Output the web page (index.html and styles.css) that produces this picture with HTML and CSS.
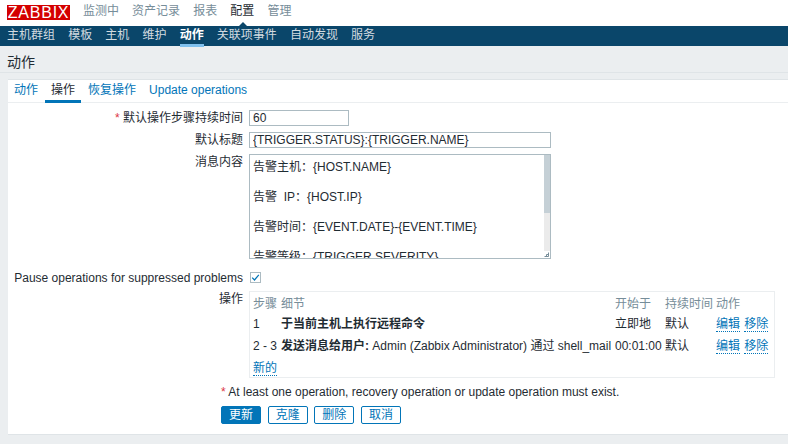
FILE: index.html
```html
<!DOCTYPE html>
<html lang="en">
<head>
    <meta charset="UTF-8">
    <meta name="viewport" content="width=device-width, initial-scale=1.0">
    <title>动作</title>
    <link rel="stylesheet" href="styles.css">
</head>
<body>
    <header class="top-bar">
        <div class="logo">ZABBIX</div>
        <nav class="top-menu">
            <a>监测中</a>
            <a>资产记录</a>
            <a>报表</a>
            <a class="current">配置</a>
            <a>管理</a>
        </nav>
    </header>
    <nav class="sub-menu">
        <a>主机群组</a>
        <a>模板</a>
        <a>主机</a>
        <a>维护</a>
        <a class="current">动作</a>
        <a>关联项事件</a>
        <a>自动发现</a>
        <a>服务</a>
    </nav>
    <h1 class="page-title">动作</h1>

    <main class="card">
        <div class="tabs">
            <a>动作</a>
            <a class="current">操作</a>
            <a>恢复操作</a>
            <a>Update operations</a>
        </div>

        <form class="form">
            <label class="label"><span class="req">*</span> 默认操作步骤持续时间</label>
            <div class="field"><input class="input short" type="text" value="60"></div>

            <label class="label">默认标题</label>
            <div class="field"><input class="input wide" type="text" value="{TRIGGER.STATUS}:{TRIGGER.NAME}"></div>

            <label class="label">消息内容</label>
            <div class="field">
                <div class="message-box">
                    <textarea class="message" spellcheck="false">告警主机：{HOST.NAME}

告警  IP：{HOST.IP}

告警时间：{EVENT.DATE}-{EVENT.TIME}

告警等级：{TRIGGER.SEVERITY}

告警信息：{TRIGGER.NAME}

告警项目：{TRIGGER.KEY1}</textarea>
                    <div class="scrollbar">
                        <div class="thumb"></div>
                        <div class="track"></div>
                        <div class="corner">
                            <svg width="6" height="7" viewBox="0 0 6 7"><path d="M4.5 1.5V5.5H0.5M4.5 3.5H2.5V5.5" fill="none" stroke="#768d99" stroke-width="1"/></svg>
                        </div>
                    </div>
                </div>
            </div>

            <label class="label pause">Pause operations for suppressed problems</label>
            <div class="field pause pause-field">
                <span class="check">
                    <svg width="9" height="9" viewBox="0 0 9 9"><path d="M1.2 4.6 3.5 7 7.8 1.8" fill="none" stroke="#0275b8" stroke-width="1.2"/></svg>
                </span>
            </div>

            <label class="label ops">操作</label>
            <div class="field">
                <table class="ops-table">
                    <thead>
                        <tr>
                            <th class="col-step">步骤</th>
                            <th class="col-detail">细节</th>
                            <th class="col-start">开始于</th>
                            <th class="col-duration">持续时间</th>
                            <th>动作</th>
                        </tr>
                    </thead>
                    <tbody>
                        <tr class="row-one">
                            <td>1</td>
                            <td><b>于当前主机上执行远程命令</b></td>
                            <td>立即地</td>
                            <td>默认</td>
                            <td><a class="link">编辑</a> <a class="link">移除</a></td>
                        </tr>
                        <tr class="row-two">
                            <td>2 - 3</td>
                            <td><b>发送消息给用户:</b> Admin (Zabbix Administrator) 通过 shell_mail</td>
                            <td>00:01:00</td>
                            <td>默认</td>
                            <td><a class="link">编辑</a> <a class="link">移除</a></td>
                        </tr>
                        <tr class="row-new">
                            <td colspan="5"><a class="link">新的</a></td>
                        </tr>
                    </tbody>
                </table>
            </div>
        </form>

        <p class="note"><span class="req">*</span> At least one operation, recovery operation or update operation must exist.</p>
        <div class="buttons">
            <button class="btn primary" type="button">更新</button>
            <button class="btn" type="button">克隆</button>
            <button class="btn" type="button">删除</button>
            <button class="btn" type="button">取消</button>
        </div>
    </main>
</body>
</html>
```
FILE: styles.css
```css
body {
    margin: 0;
    height: 444px;
    overflow: hidden;
    background-color: #ebeef0;
    color: #1f2c33;
    font-family: "Liberation Sans", "Noto Sans CJK SC", sans-serif;
    font-size: 12px;
}

.top-bar {
    display: flex;
    align-items: center;
    height: 26px;
    padding-left: 7px;
    background-color: #fff;
}
.logo {
    width: 63px;
    height: 15px;
    margin-top: -2px;
    background-color: #d40000;
    color: #fff;
    font-size: 16px;
    line-height: 15px;
    letter-spacing: 0.8px;
    text-align: center;
}
.top-menu {
    display: flex;
    gap: 13.1px;
    margin-left: 13px;
    margin-top: -7px;
    color: #768d99;
}
.top-menu a {
    position: relative;
}
.top-menu .current {
    color: #1f2c33;
}
.top-menu .current::after {
    content: "";
    position: absolute;
    left: 8px;
    top: 21px;
    border: 5px solid transparent;
    border-top: 0;
    border-bottom-color: #0a466a;
}

.sub-menu {
    display: flex;
    gap: 13.15px;
    height: 20px;
    padding-left: 7px;
    background-color: #0a466a;
    color: #d3dbe0;
    line-height: 18px;
}
.sub-menu a {
    height: 18px;
}
.sub-menu .current {
    border-bottom: 3px solid #7fc0ee;
    color: #fff;
    font-weight: bold;
}

.page-title {
    height: 26px;
    margin: 0 0 6px;
    padding-left: 7px;
    border-bottom: 1px solid #dfe4e7;
    font-size: 14px;
    font-weight: normal;
    line-height: 32px;
}

.card {
    height: 354px;
    margin-left: 8px;
    background-color: #fff;
    border-top: 1px solid #dfe4e7;
    border-bottom: 1px solid #dfe4e7;
}

.tabs {
    display: flex;
    height: 22px;
    border-bottom: 1px solid #ebeef0;
    color: #0275b8;
    line-height: 20px;
}
.tabs a {
    height: 20px;
    padding: 0 6px;
    margin-right: 1px;
}
.tabs .current {
    border-bottom: 3px solid #0275b8;
    color: #1f2c33;
}

.form {
    display: grid;
    grid-template-columns: 235px 1fr;
    column-gap: 6px;
    padding-top: 7px;
}
.label {
    text-align: right;
    line-height: 15px;
    padding-top: 1px;
}
.req {
    color: #dc3545;
}
.field {
    margin-bottom: 6px;
}
.input {
    display: block;
    box-sizing: border-box;
    height: 16px;
    padding: 0 3px;
    border: 1px solid #acbbc2;
    color: #1f2c33;
    font: inherit;
}
.short {
    width: 100px;
}
.wide {
    width: 302px;
}

.message-box {
    display: flex;
    box-sizing: border-box;
    width: 302px;
    height: 105px;
    border: 1px solid #acbbc2;
}
.message {
    flex: 1;
    padding: 5px 3px 0;
    border: 0;
    outline: 0;
    color: #1f2c33;
    font: inherit;
    line-height: 15px;
    overflow: hidden;
    resize: none;
}
.scrollbar {
    display: flex;
    flex-direction: column;
    width: 6px;
}
.thumb {
    height: 58px;
    background-color: #c5d0d6;
}
.track {
    flex: 1;
    background-color: #ebebeb;
}
.corner {
    height: 7px;
    background-color: #fff;
}
.corner svg {
    display: block;
}

.pause {
    box-sizing: border-box;
    height: 23px;
    margin-top: 3px;
    margin-bottom: 0;
    padding-top: 3px;
    white-space: nowrap;
}
.pause-field {
    padding-top: 4px;
}
.check {
    display: flex;
    align-items: center;
    justify-content: center;
    box-sizing: border-box;
    width: 11px;
    height: 11px;
    margin-left: 1px;
    border: 1px solid #acbbc2;
}

.ops-table {
    box-sizing: border-box;
    width: 526px;
    height: 87px;
    border: 1px solid #ebeef0;
    border-collapse: separate;
    border-spacing: 0;
    table-layout: fixed;
}
.ops-table th,
.ops-table td {
    padding: 0 0 0 3px;
    text-align: left;
    white-space: nowrap;
    line-height: 15px;
}
.ops-table th {
    height: 19px;
    padding-top: 3px;
    color: #768d99;
    font-weight: normal;
}
.row-one td {
    height: 20px;
}
.row-two td {
    height: 25px;
}
.row-new td {
    height: 18px;
}
.col-step {
    width: 25px;
}
.col-detail {
    width: 331px;
}
.col-start {
    width: 47px;
}
.col-duration {
    width: 48px;
}
.link {
    color: #0275b8;
    border-bottom: 1px dotted #0275b8;
}
.link + .link {
    margin-left: 1px;
}

.note {
    margin: 1px 0 0 213px;
    line-height: 15px;
}
.buttons {
    display: flex;
    gap: 6.67px;
    margin: 6px 0 0 213px;
}
.btn {
    box-sizing: border-box;
    width: 40px;
    height: 18px;
    padding: 0;
    border: 1px solid #0275b8;
    border-radius: 2px;
    background-color: #fff;
    color: #0275b8;
    font: inherit;
    line-height: 15px;
}
.primary {
    background-color: #0275b8;
    color: #fff;
}
```
